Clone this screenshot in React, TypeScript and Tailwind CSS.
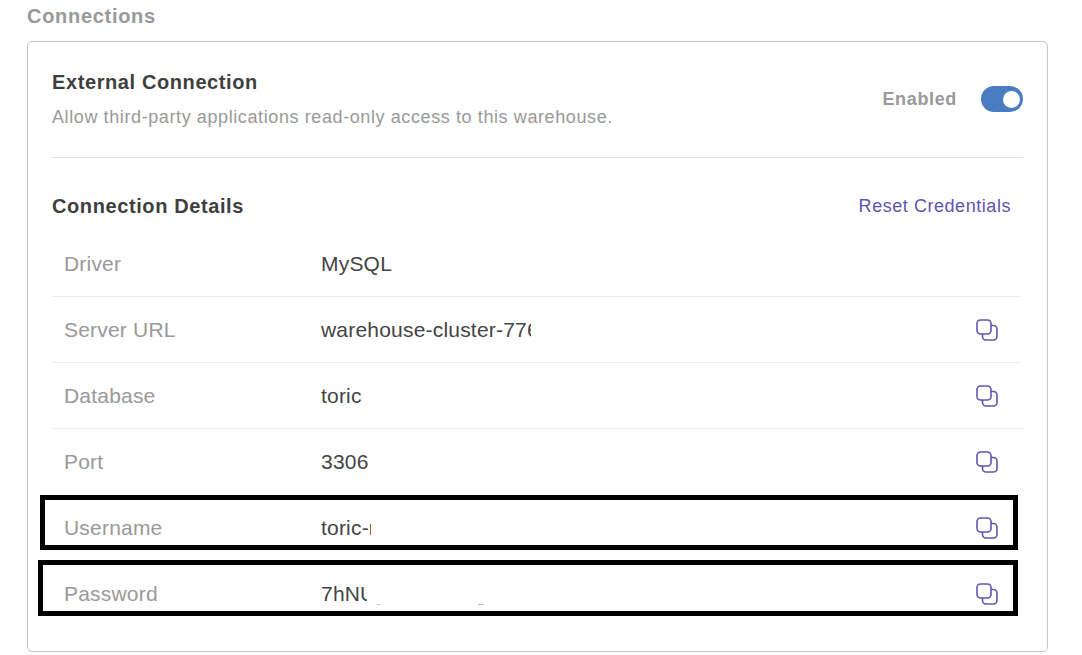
const CopyIcon = () => (
  <svg width="22" height="22" viewBox="0 0 22 22" fill="none" stroke="#5f55b0" strokeWidth="1.6">
    <rect x="1" y="1" width="14" height="14" rx="3.5" />
    <path d="M15 6.5h2.5a3.5 3.5 0 0 1 3.5 3.5v7.5a3.5 3.5 0 0 1-3.5 3.5H10a3.5 3.5 0 0 1-3.5-3.5V15" />
  </svg>
);

const rows = [
  { label: 'Driver', value: 'MySQL', clip: 'w-[210px]', copy: false },
  { label: 'Server URL', value: 'warehouse-cluster-776', clip: 'w-[210px]', copy: true },
  { label: 'Database', value: 'toric', clip: 'w-[210px]', copy: true },
  { label: 'Port', value: '3306', clip: 'w-[210px]', copy: true },
  { label: 'Username', value: 'toric-r', clip: 'w-[50px]', copy: true, box: 'top-0 left-[-12px] w-[978px] h-[55px]' },
  { label: 'Password', value: '7hNU', clip: 'w-[46px]', copy: true, box: 'top-[-1px] left-[-14px] w-[980px] h-[56px]', specks: true },
];

export default function App() {
  return (
    <div className="h-[655px] w-[1082px] overflow-hidden bg-white font-['Liberation_Sans',Arial,sans-serif]">
      <div className="pl-[27px] pt-[5px] pr-[34px]">
        <h2 className="text-[20px] leading-[22px] font-bold tracking-[0.7px] text-[#999999]">Connections</h2>
        <div className="mt-[14px] h-[611px] rounded-[5px] border border-[#c4c4c4] pl-[24px] pr-[24px] pt-[27px]">
          <div className="flex h-[89px] items-start justify-between border-b border-[#e2e2e2]">
            <div>
              <h3 className="text-[20px] leading-[26px] font-bold tracking-[0.6px] text-[#3f3f3f]">External Connection</h3>
              <p className="mt-[11px] text-[18px] leading-[22px] tracking-[0.6px] text-[#999999]">
                Allow third-party applications read-only access to this warehouse.
              </p>
            </div>
            <div className="mt-[17px] flex items-center gap-[24px]">
              <span className="text-[18px] leading-[22px] font-bold tracking-[0.65px] text-[#999999]">Enabled</span>
              <div className="flex h-[26px] w-[42px] items-center justify-end rounded-full bg-[#4a7cc4] pr-[3px]">
                <div className="h-[17px] w-[17px] rounded-full bg-white" />
              </div>
            </div>
          </div>
          <div className="mt-[34px] flex h-[28px] items-center justify-between pr-[12px]">
            <h3 className="text-[20px] leading-[26px] font-bold tracking-[0.6px] text-[#3f3f3f]">Connection Details</h3>
            <a className="text-[18px] leading-[22px] tracking-[0.55px] text-[#5f55b0]">Reset Credentials</a>
          </div>
          <div className="mt-[11px] pr-[2px]">
            {rows.map((r, i) => (
              <div
                key={r.label}
                className={`relative flex h-[66px] items-center pl-[12px] ${i === 2 ? 'mr-[-2px] pr-[25px]' : 'pr-[23px]'} ${i < 3 ? 'border-b border-[#ececec]' : ''}`}
              >
                <span className="w-[257px] text-[21px] leading-[26px] tracking-[0.2px] text-[#999999]">{r.label}</span>
                <span className={`${r.clip} overflow-hidden whitespace-nowrap text-[21px] leading-[26px] tracking-[0.2px] text-[#444444]`}>
                  {r.value}
                </span>
                <span className="flex-1" />
                {r.copy && <CopyIcon />}
                {r.specks && <div className="absolute left-[325px] top-[43px] h-[1px] w-[3px] bg-[#bdbdbd]" />}
                {r.specks && <div className="absolute left-[426px] top-[43px] h-[1px] w-[6px] bg-[#bdbdbd]" />}
                {r.box && <div className={`absolute border-[5px] border-black ${r.box}`} />}
              </div>
            ))}
          </div>
        </div>
      </div>
    </div>
  );
}
